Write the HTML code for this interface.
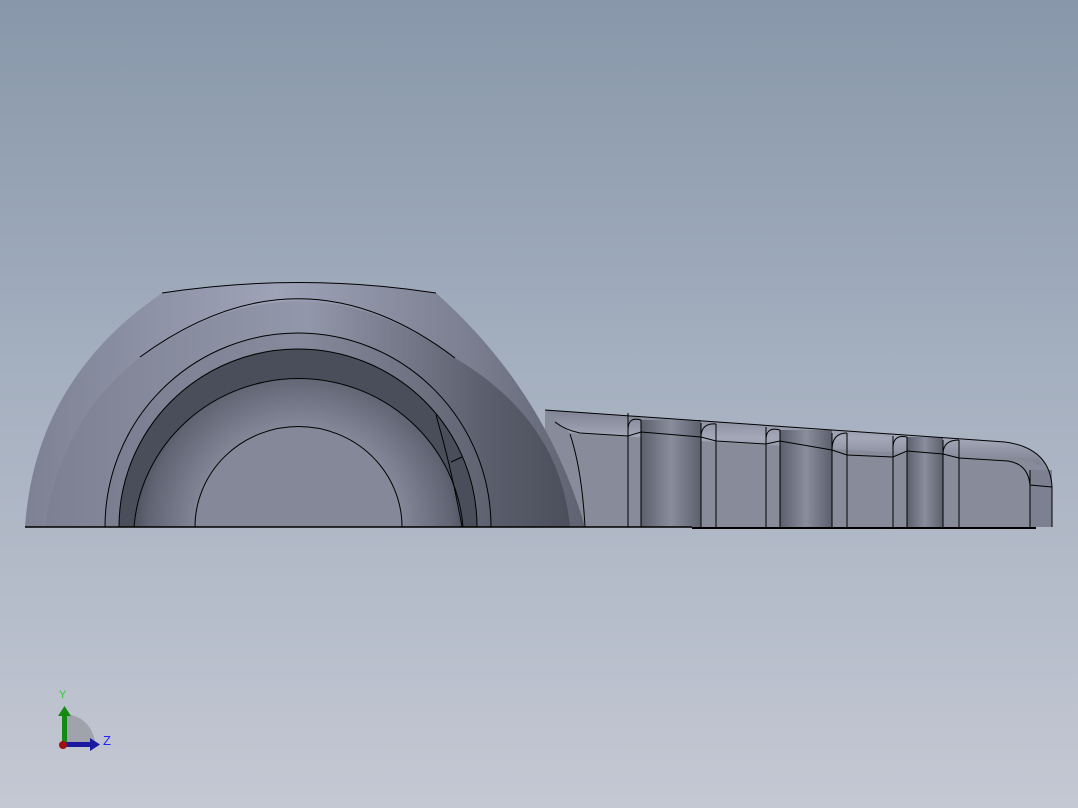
<!DOCTYPE html>
<html><head><meta charset="utf-8"><style>
html,body{margin:0;padding:0;width:1078px;height:808px;overflow:hidden}
body{background:linear-gradient(180deg,#8897aa 0%,#a4afbf 45%,#c4c8d3 100%);font-family:"Liberation Sans",sans-serif}
svg{position:absolute;left:0;top:0}
</style></head><body>
<svg width="1078" height="808" viewBox="0 0 1078 808">
<defs>
<linearGradient id="dome" x1="0" y1="0" x2="1" y2="0">
<stop offset="0" stop-color="#7d8193"/><stop offset="0.45" stop-color="#9ea3b8"/><stop offset="0.8" stop-color="#7a7e8f"/><stop offset="1" stop-color="#5f6270"/></linearGradient>
<linearGradient id="band" x1="0" y1="0" x2="1" y2="0">
<stop offset="0" stop-color="#7c8092"/><stop offset="0.5" stop-color="#9297aa"/><stop offset="0.85" stop-color="#5a5d6b"/><stop offset="1" stop-color="#4c4f5b"/></linearGradient>
<linearGradient id="ring" x1="0" y1="0" x2="1" y2="0">
<stop offset="0" stop-color="#7a7e90"/><stop offset="0.5" stop-color="#868a9c"/><stop offset="1" stop-color="#5e6270"/></linearGradient>
<radialGradient id="bowl" cx="300" cy="527" r="180" gradientUnits="userSpaceOnUse">
<stop offset="0.55" stop-color="#868999"/><stop offset="0.85" stop-color="#5f6372"/><stop offset="1" stop-color="#3e424d"/></radialGradient>
<linearGradient id="groove" x1="0" y1="0" x2="1" y2="0">
<stop offset="0" stop-color="#5c5f6c"/><stop offset="0.5" stop-color="#8a8d9c"/><stop offset="1" stop-color="#5c5f6c"/></linearGradient>
<linearGradient id="top" x1="0" y1="0" x2="0" y2="1">
<stop offset="0" stop-color="#7e8292"/><stop offset="0.5" stop-color="#a4a8b8"/><stop offset="1" stop-color="#7b7f8e"/></linearGradient>
</defs>
<path d="M545,410 L1005,442 Q1050,448 1052,487 L1052,527 L545,527 Z" fill="#888b9a"/>
<path d="M545,410 L1005,442 Q1035,446 1042,466 L1030,461 L570,433 Z" fill="url(#top)"/>
<rect x="641" y="420" width="60" height="107" fill="url(#groove)"/>
<rect x="780" y="430" width="52" height="97" fill="url(#groove)"/>
<rect x="907" y="437" width="36" height="90" fill="url(#groove)"/>
<rect x="1030" y="470" width="22" height="57" fill="#7d8090"/>
<g fill="none" stroke="#000" stroke-width="1">
<path d="M545,410 L1005,442 Q1050,448 1052,487 L1052,527"/>
<path d="M555,422 Q565,430 580,433 L628,436 L641,432 L701,437 L716,441 L766,444 L780,441 L832,450 L847,455 L893,457 L907,451 L943,454 L959,458 L1008,461 Q1028,464 1030,485 L1052,487"/>
<path d="M570,434 Q582,470 585,527"/>
<path d="M628,413V527M641,420V527M701,423V527M716,424V527M766,427V527M780,430V527M832,433V527M847,433V527M893,436V527M907,437V527M943,440V527M959,440V527M1030,470V527"/>
<path d="M641,420 Q628,416 628,430 M701,437 Q701,423 716,424 M780,430 Q766,426 766,440 M832,450 Q832,433 847,433 M907,437 Q893,434 893,448 M943,454 Q943,440 959,440"/>
<path d="M692,528H1036" stroke-width="2"/>
</g>
<path d="M25,527 Q35,380 162,293 Q300,272 436,293 Q545,390 585,527 Z" fill="url(#dome)"/>
<path d="M45,527 Q60,420 140,357 Q300,245 455,358 Q560,420 570,527 Z" fill="url(#band)"/>
<path d="M105,527 A193,194 0 0 1 491,527 Z" fill="url(#ring)"/>
<path d="M119,527 A179,178 0 0 1 477,527 Z" fill="#4a4e5b"/>
<path d="M134,527 A165,161 0 0 1 463,527 Z" fill="url(#bowl)"/>
<path d="M195,527 A103,100 0 0 1 402,527 Z" fill="#858898"/>
<g fill="none" stroke="#000" stroke-width="1">
<path d="M162,293 Q300,272 436,293"/>
<path d="M140,357 Q300,240 455,358"/>
<path d="M105,527 A193,194 0 0 1 491,527"/>
<path d="M119,527 A179,178 0 0 1 477,527"/>
<path d="M134,527 A165,161 0 0 1 463,527"/>
<path d="M195,527 A103,100 0 0 1 402,527"/>
<path d="M436,415 Q452,470 462,527 M451,462 L462,457"/>
<path d="M25,527H692" stroke-width="1.5"/>
</g>
<path d="M64,745 L64,714 A31,31 0 0 1 95,745 Z" fill="#a0a3ab"/>
<rect x="62" y="714" width="5" height="31" fill="#148a14"/>
<path d="M58,716 L64.5,706 L71,716 Z" fill="#148a14"/>
<rect x="64" y="742" width="28" height="5" fill="#1a1aa0"/>
<path d="M90,738 L100,744.5 L90,751 Z" fill="#1a1aa0"/>
<circle cx="63" cy="745" r="4" fill="#a01010"/>
<text x="59" y="698" font-size="11" fill="#2ecc2e">Y</text>
<text x="103" y="745" font-size="13" fill="#2222ff">Z</text>
</svg>
</body></html>
